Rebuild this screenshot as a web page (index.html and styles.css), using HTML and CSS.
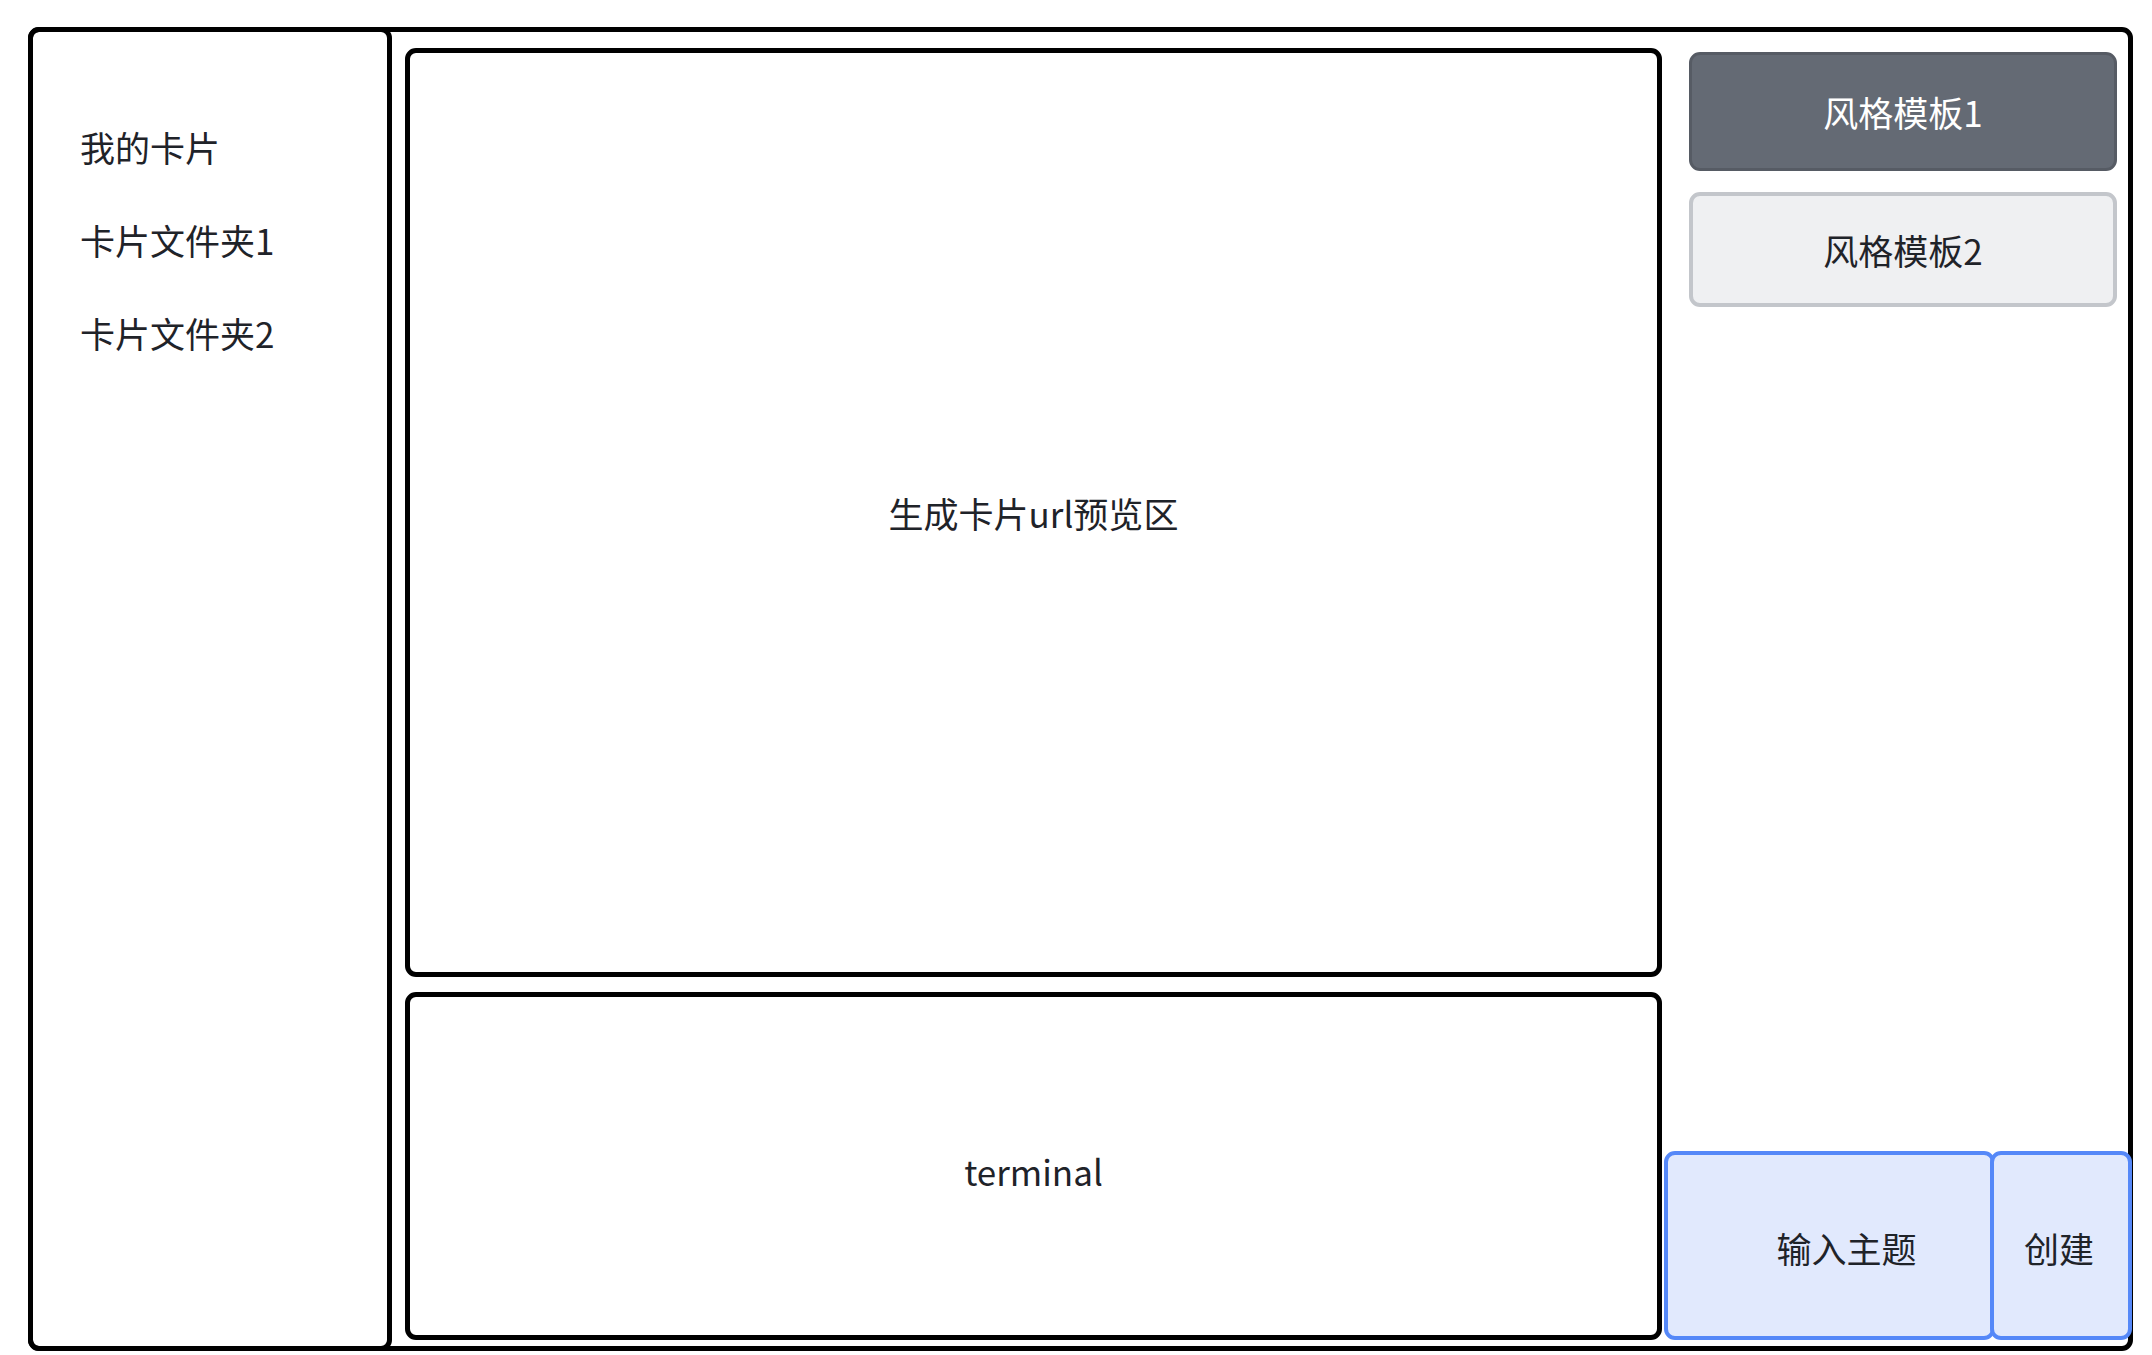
FILE: index.html
```html
<!DOCTYPE html>
<html lang="zh-CN">
<head>
<meta charset="utf-8">
<title>卡片生成</title>
<link rel="stylesheet" href="styles.css">
</head>
<body>
<div class="frame">
  <nav class="sidebar">
    <div class="nav-item">我的卡片</div>
    <div class="nav-item">卡片文件夹1</div>
    <div class="nav-item">卡片文件夹2</div>
  </nav>
  <main class="main">
    <section class="preview">生成卡片url预览区</section>
    <section class="terminal">terminal</section>
  </main>
  <aside class="panel">
    <div class="template template-active">风格模板1</div>
    <div class="template template-idle">风格模板2</div>
    <div class="actions">
      <div class="topic">输入主题</div>
      <div class="create">创建</div>
    </div>
  </aside>
</div>
</body>
</html>
```
FILE: styles.css
```css
* { box-sizing: border-box; }
html, body { margin: 0; padding: 0; background: #fff; }
body {
  font-family: "Noto Sans CJK SC", "Noto Sans", sans-serif;
  color: #1f2329;
  font-size: 35px;
}
.frame {
  margin: 27px 0 0 28px;
  width: 2105px;
  height: 1324px;
  border: 5px solid #000;
  border-radius: 11px;
  display: flex;
}
.sidebar {
  width: 364px;
  margin: -5px 0 -5px -5px;
  border: 5px solid #000;
  border-radius: 11px;
  padding: 68px 0 0 47px;
  flex-shrink: 0;
}
.nav-item {
  height: 93px;
  line-height: 93px;
}
.main {
  width: 1257px;
  margin-left: 13px;
  padding: 16px 0 6px;
  display: flex;
  flex-direction: column;
  gap: 15px;
  flex-shrink: 0;
}
.preview, .terminal {
  border: 5px solid #000;
  border-radius: 11px;
  display: flex;
  align-items: center;
  justify-content: center;
}
.preview { flex: 1; }
.terminal { height: 348px; padding-top: 8px; }
.panel {
  flex: 1;
  display: flex;
  flex-direction: column;
  padding: 20px 0 6px 2px;
}
.template {
  margin: 0 11px 0 25px;
  border-radius: 11px;
  display: flex;
  align-items: center;
  justify-content: center;
}
.template-active {
  height: 119px;
  background: #646a74;
  border: 3px solid #565b64;
  color: #fff;
}
.template-idle {
  height: 115px;
  margin-top: 21px;
  background: #eff0f2;
  border: 4px solid #c3c6cb;
}
.actions {
  margin-top: auto;
  margin-right: -4px;
  height: 189px;
  display: flex;
}
.topic, .create {
  background: #e1e9fd;
  border: 4px solid #5588f8;
  border-radius: 11px;
  display: flex;
  align-items: center;
  justify-content: center;
  padding-top: 4px;
}
.topic {
  flex: 1;
  margin-right: -5px;
  padding-left: 34px;
}
.create {
  width: 142px;
  position: relative;
  padding-right: 4px;
}
```
